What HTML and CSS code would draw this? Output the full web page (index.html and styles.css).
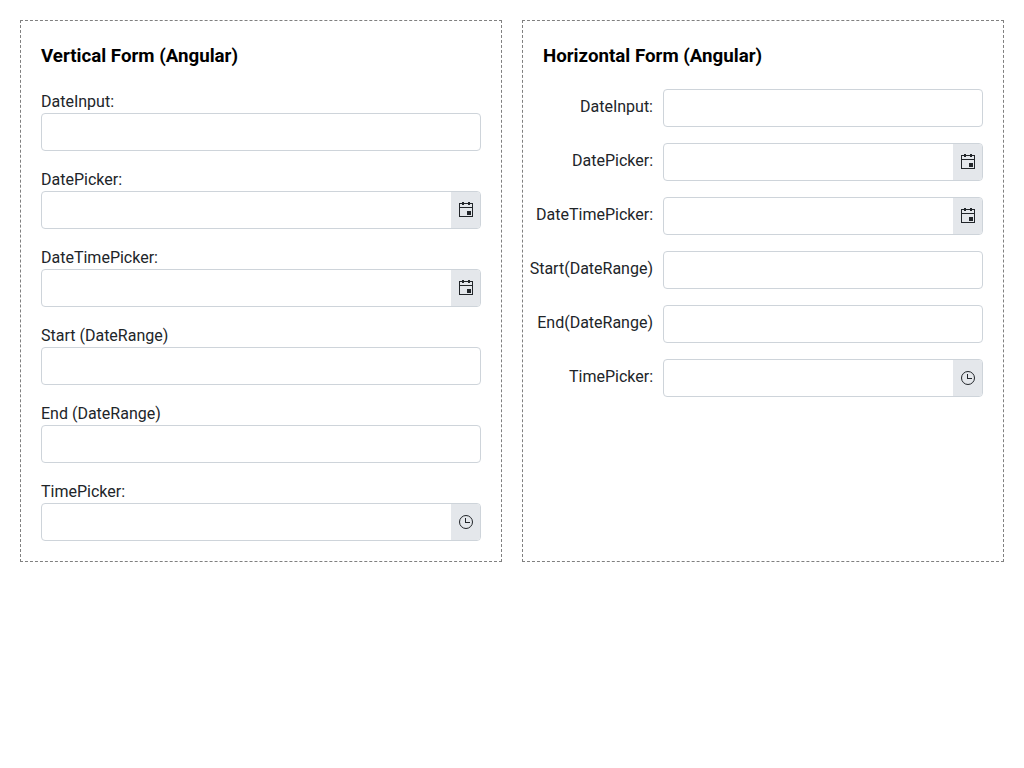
FILE: index.html
```html
<!DOCTYPE html>
<html lang="en">
<head>
<meta charset="utf-8">
<meta name="viewport" content="width=device-width, initial-scale=1">
<title>Date input forms</title>
<link rel="stylesheet" href="styles.css">
</head>
<body>
<svg class="sprite" aria-hidden="true">
  <symbol id="calendar" viewBox="0 0 16 16"><path fill="currentColor" fill-rule="evenodd" d="M1 1h3V0h2v1h4V0h2v1h3v14H1zM2 2v3h12V2h-2v1h-2V2H6v1H4V2zM2 6v8h12V6zM9 9h4v4H9z"/></symbol>
  <symbol id="clock" viewBox="0 0 16 16"><circle cx="8" cy="8" r="6.5" fill="none" stroke="currentColor"/><path fill="currentColor" d="M7 4h1v4h4v1H7z"/></symbol>
</svg>
<main class="forms">
  <form class="panel">
    <h3 class="title">Vertical Form (Angular)</h3>
    <div class="fields">
      <div class="field"><label class="label" for="v-date">DateInput:</label><div class="control"><input class="input" id="v-date" type="text"></div></div>
      <div class="field"><label class="label" for="v-picker">DatePicker:</label><div class="control"><input class="input" id="v-picker" type="text"><button class="toggle" type="button" aria-label="Open calendar"><svg class="icon"><use href="#calendar"/></svg></button></div></div>
      <div class="field"><label class="label" for="v-datetime">DateTimePicker:</label><div class="control"><input class="input" id="v-datetime" type="text"><button class="toggle" type="button" aria-label="Open calendar"><svg class="icon"><use href="#calendar"/></svg></button></div></div>
      <div class="field"><label class="label" for="v-start">Start (DateRange)</label><div class="control"><input class="input" id="v-start" type="text"></div></div>
      <div class="field"><label class="label" for="v-end">End (DateRange)</label><div class="control"><input class="input" id="v-end" type="text"></div></div>
      <div class="field"><label class="label" for="v-time">TimePicker:</label><div class="control"><input class="input" id="v-time" type="text"><button class="toggle" type="button" aria-label="Open time list"><svg class="icon"><use href="#clock"/></svg></button></div></div>
    </div>
  </form>
  <form class="panel panel-horizontal">
    <h3 class="title">Horizontal Form (Angular)</h3>
    <div class="fields">
      <div class="field"><label class="label" for="h-date">DateInput:</label><div class="control"><input class="input" id="h-date" type="text"></div></div>
      <div class="field"><label class="label" for="h-picker">DatePicker:</label><div class="control"><input class="input" id="h-picker" type="text"><button class="toggle" type="button" aria-label="Open calendar"><svg class="icon"><use href="#calendar"/></svg></button></div></div>
      <div class="field"><label class="label" for="h-datetime">DateTimePicker:</label><div class="control"><input class="input" id="h-datetime" type="text"><button class="toggle" type="button" aria-label="Open calendar"><svg class="icon"><use href="#calendar"/></svg></button></div></div>
      <div class="field"><label class="label" for="h-start">Start(DateRange)</label><div class="control"><input class="input" id="h-start" type="text"></div></div>
      <div class="field"><label class="label" for="h-end">End(DateRange)</label><div class="control"><input class="input" id="h-end" type="text"></div></div>
      <div class="field"><label class="label" for="h-time">TimePicker:</label><div class="control"><input class="input" id="h-time" type="text"><button class="toggle" type="button" aria-label="Open time list"><svg class="icon"><use href="#clock"/></svg></button></div></div>
    </div>
  </form>
</main>
</body>
</html>
```
FILE: styles.css
```css
* {
  box-sizing: border-box;
}

body {
  margin: 20px;
  background: #fff;
  color: #212529;
  font-family: Roboto, sans-serif;
  font-size: 16px;
  line-height: 22px;
}

.sprite {
  position: absolute;
  width: 0;
  height: 0;
}

.forms {
  display: grid;
  grid-template-columns: 1fr 1fr;
  gap: 20px;
}

.panel {
  min-width: 0;
  padding: 20px;
  border: 1px dashed #808080;
}

.title {
  margin: 0 0 18px;
  color: #000;
  font-weight: 700;
  line-height: 30px;
}

.fields {
  display: flex;
  flex-direction: column;
  gap: 16px;
}

.field {
  display: flex;
  flex-direction: column;
}

.label {
  padding-top: 2px;
}

.control {
  display: flex;
  height: 38px;
  overflow: hidden;
  border: 1px solid #ced4da;
  border-radius: 4px;
  background: #fff;
}

.control:focus-within {
  border-color: #86b7fe;
}

.input {
  flex: 1;
  min-width: 0;
  padding: 6px 12px;
  border: 0;
  outline: 0;
  background: transparent;
  color: inherit;
  font: inherit;
}

.toggle {
  display: flex;
  align-items: center;
  justify-content: center;
  width: 29px;
  padding: 0;
  border: 0;
  background: #e4e7eb;
  color: #212529;
  cursor: pointer;
}

.icon {
  width: 16px;
  height: 16px;
}

.panel-horizontal .field {
  flex-direction: row;
  gap: 10px;
}

.panel-horizontal .label {
  display: flex;
  flex: 0 0 25%;
  justify-content: flex-end;
  min-width: 0;
  width: 25%;
  padding-top: 7px;
  white-space: nowrap;
}

.panel-horizontal .control {
  flex: 1;
  min-width: 0;
}
```
